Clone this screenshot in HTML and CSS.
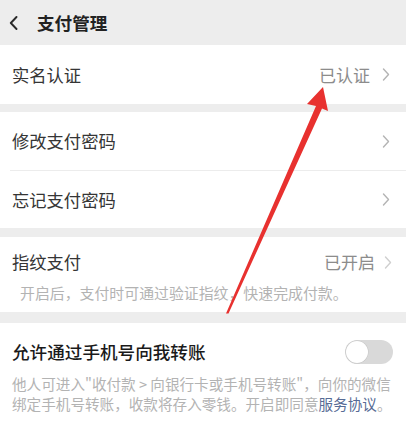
FILE: index.html
```html
<!DOCTYPE html>
<html lang="zh-CN">
<head>
<meta charset="utf-8">
<title>支付管理</title>
<link rel="stylesheet" href="styles.css">
</head>
<body>
<div class="page">
  <header class="topbar">
    <svg class="back" width="9" height="14" viewBox="0 0 9 14"><polyline points="7.5,1 1.8,7 7.5,13" fill="none" stroke="#2a2a2a" stroke-width="1.9" stroke-linecap="round" stroke-linejoin="round"/></svg>
    <h1 class="title">支付管理</h1>
  </header>

  <section class="group g1">
    <div class="row">
      <span class="label">实名认证</span>
      <span class="value">已认证</span>
      <svg class="chev" width="8" height="13" viewBox="0 0 8 13"><polyline points="1.5,1 6.5,6.5 1.5,12" fill="none" stroke="#b4b4b4" stroke-width="1.4" stroke-linecap="round" stroke-linejoin="round"/></svg>
    </div>
  </section>

  <section class="group g2">
    <div class="row">
      <span class="label">修改支付密码</span>
      <svg class="chev" width="8" height="13" viewBox="0 0 8 13"><polyline points="1.5,1 6.5,6.5 1.5,12" fill="none" stroke="#b4b4b4" stroke-width="1.4" stroke-linecap="round" stroke-linejoin="round"/></svg>
    </div>
    <div class="divider"></div>
    <div class="row row-b">
      <span class="label">忘记支付密码</span>
      <svg class="chev" width="8" height="13" viewBox="0 0 8 13"><polyline points="1.5,1 6.5,6.5 1.5,12" fill="none" stroke="#b4b4b4" stroke-width="1.4" stroke-linecap="round" stroke-linejoin="round"/></svg>
    </div>
  </section>

  <section class="group g3">
    <div class="head head-finger">
      <span class="label">指纹支付</span>
      <span class="value value-on">已开启</span>
      <svg class="chev" width="8" height="13" viewBox="0 0 8 13"><polyline points="1.5,1 6.5,6.5 1.5,12" fill="none" stroke="#cfcfcf" stroke-width="1.4" stroke-linecap="round" stroke-linejoin="round"/></svg>
    </div>
    <p class="sub">开启后，支付时可通过验证指纹，快速完成付款。</p>
  </section>

  <section class="group g4">
    <div class="head head-switch">
      <span class="label strong">允许通过手机号向我转账</span>
      <span class="switch"><span class="knob"></span></span>
    </div>
    <p class="desc">他人可进入"收付款 &gt; 向银行卡或手机号转账"，向你的微信<br>绑定手机号转账，收款将存入零钱。开启即同意<span class="link">服务协议</span>。</p>
  </section>

  <svg class="arrow" width="406" height="428" viewBox="0 0 406 428">
    <polygon points="323,87 328,111 322,108.5 228.5,313.5 226,313.5 316,106 307,104" fill="#e8312f"/>
  </svg>
</div>
</body>
</html>
```

FILE: styles.css
```css
* { box-sizing: border-box; }

html, body {
  margin: 0;
  padding: 0;
  background: #ededed;
}

body {
  font-family: "Noto Sans CJK SC", "Noto Sans", "Liberation Sans", sans-serif;
  color: #333333;
}

.page {
  position: relative;
  width: 406px;
  min-height: 428px;
  display: flex;
  flex-direction: column;
  overflow: hidden;
}

.topbar {
  height: 45px;
  display: flex;
  align-items: center;
  padding-left: 9px;
  background: #ededed;
}

.back {
  display: block;
  margin-right: 19px;
}

.title {
  margin: 0;
  font-size: 17.6px;
  font-weight: 700;
  color: #222222;
  line-height: 24px;
}

.group {
  background: #ffffff;
}

.g1 { margin-top: 0; }
.g2 { margin-top: 8px; }
.g3 { margin-top: 9px; padding: 13px 0 9px; }
.g4 { margin-top: 11px; padding: 17px 0 0; flex: 1; }

.row {
  height: 58px;
  display: flex;
  align-items: center;
  padding: 0 16px 0 12px;
}

.g1 .row { height: 59px; }
.row-b { height: 57px; }

.divider {
  height: 1px;
  margin-left: 10px;
  background: #ececec;
}

.head {
  display: flex;
  align-items: center;
  height: 24px;
  padding: 0 16px 0 12px;
}

.head-finger {
  padding-right: 14px;
}

.label {
  flex: 1;
  font-size: 17.3px;
  line-height: 24px;
  color: #353535;
}

.label.strong {
  color: #1a1a1a;
  font-size: 17.6px;
  font-weight: 500;
}

.value {
  font-size: 17px;
  line-height: 24px;
  color: #8c8c8c;
  margin-right: 12px;
}

.value-on {
  margin-right: 9px;
}

.chev {
  display: block;
  flex: none;
}

.sub {
  margin: 9px 0 0;
  padding-left: 20px;
  font-size: 14.9px;
  line-height: 20px;
  color: #b3b3b3;
}

.head-switch {
  padding-right: 13px;
}

.switch {
  position: relative;
  width: 48px;
  height: 24px;
  border-radius: 12px;
  background: #d9d9d9;
  flex: none;
}

.knob {
  position: absolute;
  left: 1px;
  top: 1px;
  width: 22px;
  height: 22px;
  border-radius: 50%;
  background: #ffffff;
  box-shadow: 0 0 0 0.5px #c4c4c4;
}

.desc {
  margin: 10px 0 0;
  padding: 0 4px 0 12px;
  font-size: 14.6px;
  line-height: 20px;
  color: #b3b3b3;
  white-space: nowrap;
}

.link {
  color: #576b95;
}

.arrow {
  position: absolute;
  left: 0;
  top: 0;
  pointer-events: none;
}
```
